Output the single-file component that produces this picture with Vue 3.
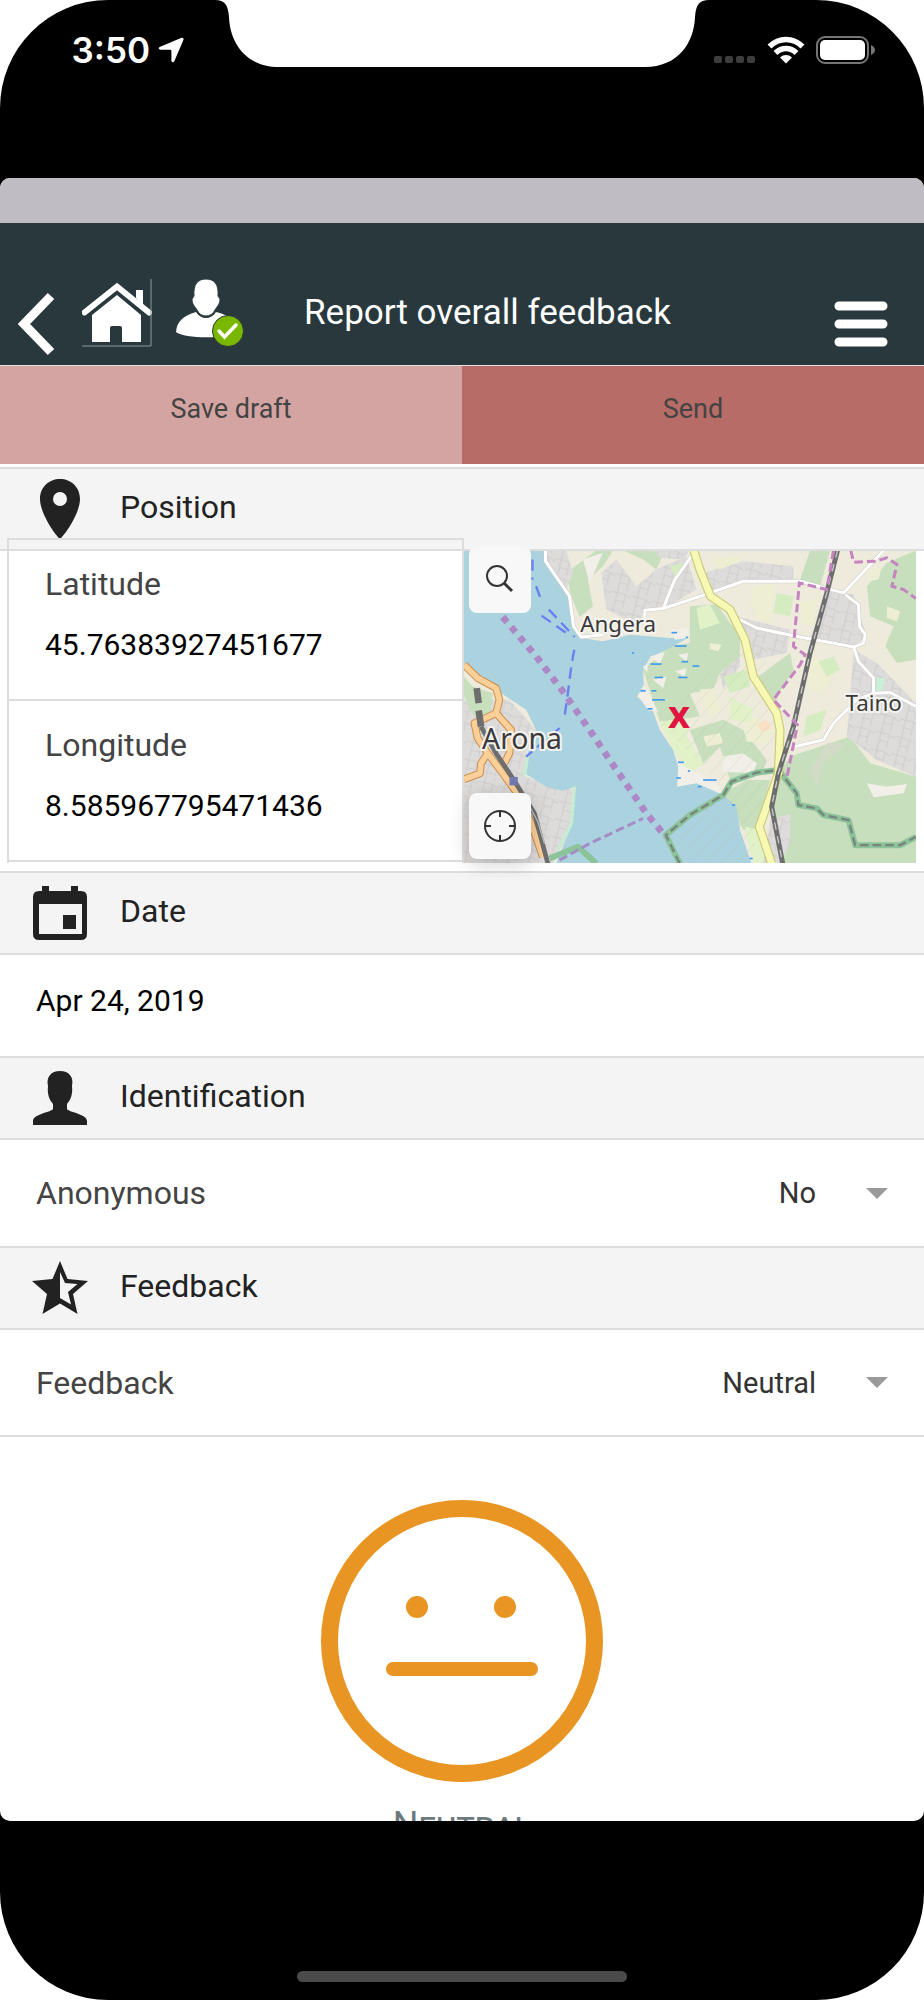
<template>
  <div class="device">
    <header class="status-bar">
      <div class="status-left">
        <span class="time">3:50</span>
        <svg class="location" viewBox="0 0 26 26" aria-hidden="true">
          <path d="M23 1Q26 0 25.400 3L16.400 24Q14.600 26.500 13.400 24V14Q13.400 12.800 12.200 12.800H2.200Q-.6 11.600 1.600 10Z" fill="#fff" />
        </svg>
      </div>
      <svg class="notch" viewBox="0 0 494 68" aria-hidden="true">
        <path d="M0 0C10 0 13 5 14 17C15 43 31 67 64 67H430C463 67 479 43 480 17C481 5 484 0 494 0Z" fill="#fff" />
      </svg>
      <div class="status-right">
        <svg class="signal" viewBox="0 0 42 28" aria-hidden="true">
          <rect v-for="n in 4" :key="n" :x="(n - 1) * 11" y="20" width="8" height="7" rx="2" fill="#3d3d3d" />
        </svg>
        <svg class="wifi" viewBox="0 0 38 28" aria-hidden="true">
          <g fill="none" stroke="#fff" stroke-width="5.500">
            <path d="M2.500 10.500C12 1 26 1 35.500 10.500" />
            <path d="M8.500 17C14.500 11 23.500 11 29.500 17" />
          </g>
          <path d="M13 21.500C16.500 18.200 21.500 18.200 25 21.500L19 27.500Z" fill="#fff" />
        </svg>
        <svg class="battery" viewBox="0 0 60 28" aria-hidden="true">
          <rect x="1" y="1" width="51" height="26" rx="8" fill="none" stroke="#757575" stroke-width="2" />
          <rect x="4" y="4" width="45" height="20" rx="5" fill="#fff" />
          <path d="M55 9Q59 11 59 14Q59 17 55 19Z" fill="#757575" />
        </svg>
      </div>
    </header>

    <main class="sheet">
      <div class="strip"></div>
      <nav class="toolbar">
        <button class="icon-button back" aria-label="Back">
          <svg viewBox="0 0 38 66"><path d="M33 5L6 33L33 61" fill="none" stroke="#fff" stroke-width="9" stroke-linejoin="miter" /></svg>
        </button>
        <button class="icon-button home" aria-label="Home">
          <svg viewBox="0 0 70 68">
            <path d="M54 11H61V26L54 19Z" fill="#fff" />
            <path d="M2.500 33.500L35 7.500L67 33.500" fill="none" stroke="#fff" stroke-width="6" stroke-linecap="round" stroke-linejoin="miter" />
            <path d="M35 16L59 36V63H40V49Q40 47 38 47H30Q28 47 28 49V63H10V36Z" fill="#fff" />
            <path d="M69 0V67M0 67H69" stroke="#8f999b" fill="none" />
          </svg>
        </button>
        <button class="icon-button user" aria-label="Account">
          <svg viewBox="0 0 68 68">
            <path d="M0 53C1 42 7 37 20 33C25 41 35 41 40 33C56 37 61 43 61 53C53 60 8 60 0 53Z" fill="#fff" />
            <path d="M30 0C38 0 43 5 42 17L44 20C44 26 41 27 39 31C37 35 34 37 30 37C26 37 23 35 21 31C19 27 16 26 16 20L18 17C17 5 22 0 30 0Z" fill="#fff" stroke="#28383d" stroke-width="1" />
            <circle cx="52" cy="52" r="15.500" fill="#7ab800" stroke="#28383d" />
            <path d="M43 52L48.500 58L60 46" fill="none" stroke="#fff" stroke-width="3.500" stroke-linecap="round" />
          </svg>
        </button>
        <h1>Report overall feedback</h1>
        <button class="icon-button menu" aria-label="Menu">
          <svg viewBox="0 0 54 46">
            <path d="M5 5H49M5 23H49M5 41H49" stroke="#fff" stroke-width="9" stroke-linecap="round" />
          </svg>
        </button>
      </nav>

      <div class="actions">
        <button class="save">Save draft</button>
        <button class="send">Send</button>
      </div>

      <section>
        <h2>
          <svg viewBox="0 0 60 60" aria-hidden="true">
            <path fill-rule="evenodd" d="M30 0C19 0 10 8 10 20C10 34 25 56 30 60C35 56 50 34 50 20C50 8 41 0 30 0ZM30 13A7 7 0 1 1 30 27A7 7 0 1 1 30 13Z" />
          </svg>
          <span>Position</span>
        </h2>
        <div class="position">
          <div class="coords">
            <div v-for="field in coords" :key="field.id" class="coord">
              <label :for="field.id">{{ field.label }}</label>
              <input :id="field.id" v-model="field.value" type="text">
            </div>
          </div>

          <div class="map">
            <svg class="tiles" viewBox="24 63 1353 937" preserveAspectRatio="xMidYMid slice" role="img" aria-label="Map">
              <defs>
                <pattern id="streets" width="62" height="54" patternUnits="userSpaceOnUse" patternTransform="rotate(14)">
                  <rect width="62" height="54" fill="#dddcdb" />
                  <path d="M0 12H40L62 20M18 0V54M44 14V54M18 36H44" fill="none" stroke="#cbc9c9" stroke-width="2.500" />
                </pattern>
                <pattern id="reserve" width="34" height="34" patternUnits="userSpaceOnUse" patternTransform="rotate(42)">
                  <path d="M0 0V34" stroke="#b8b69d" stroke-width="2" opacity=".6" />
                </pattern>
              </defs>
              <rect x="24" y="63" width="1353" height="937" fill="#eeebdd" />

              <!-- woods and meadows -->
              <g fill="#c8dfbd">
                <path d="M330 130L420 63H470L440 110L395 150L410 230L370 262L345 200Z" />
                <path d="M500 63H625L600 120L560 90Z" />
                <path d="M700 230L780 225L850 320L850 380L790 430L770 480L700 490L730 560L610 575L560 420L640 350L700 340Z" />
                <path d="M1060 63H1120L1090 170L1030 150Z" />
                <path d="M1230 170L1290 100L1377 63V390L1320 400L1285 350L1310 290L1240 260Z" />
                <path d="M905 440L1000 370L1010 420L950 520Z" />
                <path d="M700 600L800 570L860 600L930 690L920 720L820 750L790 650L740 700Z" />
                <path d="M1000 680L1180 620L1240 700L1377 740V1000H970L950 830L970 720Z" />
                <path d="M800 790L870 750H940L900 900L860 900Z" />
              </g>
              <g fill="#e1f2c9">
                <path d="M610 575L700 565L690 620L740 700L700 730L650 660Z" />
                <path d="M820 500L890 540L880 580L820 570Z" />
                <path d="M865 890L920 900L950 1000H890Z" />
                <path d="M720 235L760 225L790 280L730 300Z" />
              </g>
              <g fill="url(#streets)">
                <path d="M270 63H330L350 130L330 180L265 95Z" />
                <path d="M435 130L480 90L540 170L600 120L690 80L720 180L620 240L560 240L550 290L450 240Z" />
                <path d="M745 130L860 95L1010 110L1010 155L850 155L760 190Z" />
                <path d="M840 260L1000 300L990 370L890 390Z" />
                <path d="M1120 185L1190 195L1230 320L1190 350L1060 325Z" />
                <path d="M1190 360L1260 400L1377 520V740L1260 690L1170 620L1180 500Z" />
                <path d="M24 510L160 510L240 600L210 670L205 740L350 780L345 900L290 1000H24Z" />
                <path d="M590 63H700L680 90L610 85Z" />
                <path d="M790 430L850 380L850 410L800 480Z" />
                <path d="M940 870L1000 850L1000 940L970 1000H920Z" />
              </g>
              <g fill="#f2efe9">
                <path d="M800 680L860 670L900 700L890 730L800 725Z" />
                <path d="M665 700L780 760L800 795L720 765L660 775Z" />
                <path d="M1230 760L1290 770L1350 762L1340 790L1250 802Z" />
                <path d="M380 90L440 70L400 160Z" />
              </g>
              <g fill="#eeeed2">
                <path d="M900 170L955 165L940 280L900 270Z" />
                <path d="M860 590L890 560L950 600L930 640L870 635Z" />
                <path d="M730 480L770 475L790 540L760 560Z" />
                <path d="M1060 380L1140 410L1100 490L1050 470Z" />
                <path d="M770 90L840 80L850 95L790 120ZM760 340L795 345L785 365L760 358ZM880 230L890 170L905 175L900 240Z" />
                <path d="M740 620L790 610L800 640L750 650ZM1030 220L1080 210L1070 290L1035 280Z" />
                <path d="M1290 230L1330 245L1320 275L1290 265ZM1240 120L1275 110L1265 150L1235 155Z" />
              </g>
              <g fill="#d5ebc0">
                <path d="M960 190L1010 200L1000 260L950 250Z" />
                <path d="M1050 560L1110 540L1090 600L1040 620ZM1085 395L1130 380L1150 420L1110 440Z" />
                <path d="M800 440L870 420L880 470L820 490ZM640 110L680 100L660 150Z" />
              </g>
              <path d="M1060 720L1110 640L1170 640L1100 700L1080 770Z" fill="#d2dbc6" />
              <path d="M900 585L930 570L945 595L915 605Z" fill="#fadfc6" />
              <path d="M1260 445H1285L1275 485H1255Z" fill="#c9f0d5" />
              <path d="M24 440L50 470L110 490L105 545L60 570L24 500Z" fill="#c8dfbd" />

              <!-- lake -->
              <path fill="#aad3df" d="M24 63H265V95L340 205L350 290L375 325L440 335L520 315L640 325L700 322L640 355L580 385L560 420L562 465L542 500L590 545L610 600L650 660L665 710L662 770L720 760L800 795L840 830L850 900L885 1000H300L345 890L358 770L320 782L270 770L205 730L215 670L240 600L210 540L150 500L70 450L24 420Z" />
              <path fill="#f2efe9" d="M580 380L625 368L610 402ZM590 450L630 440L620 475ZM545 495L570 480L605 545L575 542ZM640 300L700 295L690 325L655 330ZM665 375L695 370L690 395ZM560 410L575 402L572 430ZM655 425L690 415L685 440Z" />
              <path fill="url(#reserve)" d="M700 480L900 300L980 560L930 720L885 1000H670L630 910L810 780L610 580Z" />
              <path d="M355 770L345 880L305 960M205 740L215 670" fill="none" stroke="#c7ecd2" stroke-width="10" />
              <path v-for="d in marsh" :key="d" :d="d" stroke="#3e9bf4" stroke-width="5" />

              <!-- park border -->
              <g fill="none" stroke-linejoin="round">
                <path d="M670 1000L628 915L700 855L800 795L825 755L900 728L965 720L1020 790L1025 825L1080 835L1100 855L1175 870L1195 945H1330L1377 920M280 985L365 950L420 1000" stroke="#8cc39b" stroke-width="18" />
                <path d="M670 1000L628 915L700 855L800 795L825 755L900 728L965 720L1020 790L1025 825L1080 835L1100 855L1175 870L1195 945H1330L1377 920" stroke="#78857d" stroke-width="7" stroke-dasharray="26 12" />
              </g>

              <!-- roads -->
              <g fill="none" stroke="#cdcac7" stroke-width="12" stroke-linejoin="round">
                <path v-for="d in roads" :key="d" :d="d" />
              </g>
              <g fill="none" stroke="#fff" stroke-width="9" stroke-linejoin="round">
                <path v-for="d in roads" :key="d" :d="d" />
              </g>
              <path :d="mainRoad" fill="none" stroke="#c9cc7c" stroke-width="27" stroke-linejoin="round" />
              <path :d="mainRoad" fill="none" stroke="#f6f8b4" stroke-width="20" stroke-linejoin="round" />
              <g fill="none" stroke-linejoin="round">
                <path :d="aronaRoads" stroke="#c98f50" stroke-width="23" />
                <path :d="aronaRoads" stroke="#fbcf98" stroke-width="17" />
              </g>

              <!-- railways -->
              <g fill="none">
                <path :d="railway" stroke="#6e6e6e" stroke-width="15" />
                <path :d="railway" stroke="#c8c8c8" stroke-width="4" stroke-dasharray="22 20" />
                <path d="M62 475L68 520M68 542L75 590" stroke="#6e6e6e" stroke-width="20" />
                <path d="M75 590L120 670L170 745L235 850L275 1000" stroke="#6e6e6e" stroke-width="14" />
                <path d="M200 790L245 875L265 940" stroke="#c0c0c0" stroke-width="4" />
                <rect x="160" y="741" width="25" height="25" fill="#7179b0" />
              </g>

              <!-- borders and ferry lines -->
              <g fill="none" stroke="#c583c0" stroke-width="9" stroke-dasharray="26 12">
                <path d="M1130 63L1110 180L1028 160L1010 350L1045 375L1030 405L950 510L1022 585L990 745" />
                <path d="M1182 63L1190 98L1255 95L1290 85L1320 105L1305 170L1340 180L1377 207" />
                <path d="M310 990L400 940L560 865" stroke="#a58cc6" />
              </g>
              <path d="M140 262L240 380L320 485L400 600L460 690L515 770L570 850L628 920" fill="none" stroke="#ac88c6" stroke-width="20" stroke-dasharray="20 19" />
              <g fill="none" stroke="#6a7ff0" stroke-width="7" stroke-dasharray="34 20">
                <path d="M229 90V150M240 170L258 220M278 240L355 322M256 258L345 320M354 360L345 410L335 490L325 560M310 595L210 680" />
              </g>

              <g class="places">
                <text x="372" y="306">Angera</text>
                <text class="town" x="78" y="656">Arona</text>
                <text x="1166" y="544">Taino</text>
              </g>
              <text class="marker" x="668" y="593">x</text>
            </svg>
            <button class="map-button search" aria-label="Search">
              <svg viewBox="0 0 32 32">
                <circle cx="13" cy="12" r="10" />
                <path d="M20 19L28 27" stroke-width="3" />
              </svg>
            </button>
            <button class="map-button locate" aria-label="Locate">
              <svg viewBox="0 0 32 32">
                <circle cx="16" cy="16" r="15" />
                <path d="M16 1V7M16 25V31M1 16H7M25 16H31" />
              </svg>
            </button>
          </div>
        </div>
      </section>

      <section>
        <h2>
          <svg viewBox="0 0 60 60" aria-hidden="true">
            <path fill-rule="evenodd" d="M12 3H19V8H41V3H48V8H51Q57 8 57 14V51Q57 57 51 57H9Q3 57 3 51V14Q3 8 9 8H12ZM9 21V51H52V21ZM33 32H46V46H33Z" />
          </svg>
          <span>Date</span>
        </h2>
        <div class="row date-row">
          <input v-model="date" type="text" aria-label="Date">
        </div>
      </section>

      <section>
        <h2>
          <svg viewBox="0 0 60 60" aria-hidden="true">
            <path d="M30 3C39 3 44 9 42 18C43 28 40 32 37 36V41C38 44 57 46 57 53V57H3V53C3 46 22 44 23 41V36C20 32 17 28 18 18C16 9 21 3 30 3Z" />
          </svg>
          <span>Identification</span>
        </h2>
        <div class="row">
          <label for="anonymous">Anonymous</label>
          <select id="anonymous" v-model="anonymous">
            <option>No</option>
            <option>Yes</option>
          </select>
          <svg class="arrow" viewBox="0 0 22 11" aria-hidden="true"><path d="M0 0H22L11 11Z" /></svg>
        </div>
      </section>

      <section>
        <h2>
          <svg viewBox="0 0 60 60" aria-hidden="true">
            <path fill-rule="evenodd" d="M30 3L37.500 21L58 23L43 36L47.500 56L30 45.500L12.500 56L17 36L2 23L22.500 21ZM30 14V40L41 46.500L38 34L47.500 26L35 25Z" />
          </svg>
          <span>Feedback</span>
        </h2>
        <div class="row last">
          <label for="feedback">Feedback</label>
          <select id="feedback" v-model="feedback">
            <option>Neutral</option>
            <option>Good</option>
            <option>Bad</option>
          </select>
          <svg class="arrow" viewBox="0 0 22 11" aria-hidden="true"><path d="M0 0H22L11 11Z" /></svg>
        </div>
      </section>

      <figure class="mood">
        <svg viewBox="0 0 282 282" aria-hidden="true">
          <circle cx="141" cy="141" r="132.500" fill="none" stroke="#e89523" stroke-width="17" />
          <circle cx="96" cy="107" r="11" fill="#e89523" />
          <circle cx="184" cy="107" r="11" fill="#e89523" />
          <rect x="65" y="162" width="152" height="14" rx="7" fill="#e89523" />
        </svg>
        <figcaption>{{ feedback }}</figcaption>
      </figure>
    </main>

    <footer class="home-area">
      <div class="home-indicator"></div>
    </footer>
  </div>
</template>

<script setup>
import { ref } from 'vue';

const coords = ref([
  { id: 'latitude', label: 'Latitude', value: '45.76383927451677' },
  { id: 'longitude', label: 'Longitude', value: '8.585967795471436' }
]);
const date = ref('Apr 24, 2019');
const anonymous = ref('No');
const feedback = ref('Neutral');

// map lines
const roads = [
  'M268 63V95L340 200L352 290L375 322L440 315',
  'M565 265V242L620 237L745 195L860 155H1030L1160 190L1280 63',
  'M620 237L655 150L705 80',
  'M840 265L900 295L1010 318L1190 352L1220 340L1225 315L1208 290L1205 225L1165 195',
  'M1190 352L1205 395L1250 445V490L1300 488L1377 530',
  'M1250 490L1200 510L1130 580L1100 630L1015 650'
];
const mainRoad = 'M712 63L730 120L762 200L820 240L865 330L890 440L960 550L970 600L965 730L908 890L945 1000';
const aronaRoads = 'M24 405L65 445L120 475L130 510L120 550L55 580L65 625L95 670L75 700L72 730L24 748M120 550L165 600L160 670L145 700M95 670L140 730L190 800L225 880L260 980';
const railway = 'M1142 63L1110 190L1060 370L1010 590L965 730L945 830L978 1000';
const marsh = [
  'M645 309H662', 'M655 349H690', 'M582 403H615', 'M675 396H695', 'M708 409H728',
  'M595 443H620', 'M665 443H693', 'M552 483H568', 'M585 483H600', 'M587 510H625',
  'M573 537H588', 'M665 697H682', 'M740 750H780', 'M660 744H673', 'M724 770H735',
  'M527 370H533', 'M688 323H694', 'M826 825H836', 'M879 985H888', 'M694 723H701'
];
</script>

<style>
body {
  margin: 0;
  background: #fff;
}
</style>

<style scoped>
.device {
  display: flex;
  flex-direction: column;
  height: 100vh;
  overflow: hidden;
  background: #000;
  border-radius: 108px;
  font-family: Roboto, sans-serif;
  color: #222;
}

button,
input,
select {
  margin: 0;
  padding: 0;
  border: 0;
  background: none;
  font-family: inherit;
  outline: none;
}

svg {
  display: block;
  flex: none;
}

.status-bar {
  display: grid;
  grid-template-columns: 1fr 494px 1fr;
  flex: none;
  height: 178px;
}

.status-left,
.status-right {
  display: flex;
  align-items: center;
  height: 100px;
}

.status-left {
  justify-content: flex-end;
  gap: 8px;
  padding-right: 31px;
}

.time {
  color: #fff;
  font-family: Inter, sans-serif;
  font-size: 35px;
  font-weight: 600;
}

.location {
  width: 26px;
}

.notch {
  width: 494px;
}

.status-right {
  gap: 11px;
  padding-left: 5px;
}

.signal {
  width: 42px;
}

.wifi {
  width: 38px;
}

.battery {
  width: 60px;
}

.sheet {
  flex: 1;
  min-height: 0;
  overflow: hidden;
  background: #fff;
  border-radius: 10px;
}

.strip {
  height: 45px;
  background: #bfbdc3;
}

.toolbar {
  display: flex;
  align-items: flex-start;
  height: 86px;
  padding: 56px 36px 0 18px;
  background: #28383d;
}

.icon-button svg {
  width: 100%;
}

.back {
  width: 38px;
  margin-top: 12px;
}

.home {
  width: 70px;
  margin-left: 26px;
}

.user {
  width: 68px;
  margin-left: 24px;
}

h1 {
  flex: 1;
  margin: 10px 0 0 60px;
  color: #fff;
  font-size: 35px;
  font-weight: 400;
  line-height: 48px;
}

.menu {
  width: 54px;
  margin-top: 22px;
}

.actions {
  display: flex;
  margin-bottom: 3px;
  border-top: 1px solid #e7e2e1;
}

.actions button {
  flex: 1;
  height: 98px;
  padding-bottom: 12px;
  color: #444;
  font-size: 27px;
}

.save {
  background: #d4a4a2;
}

.actions .send {
  background: #b86c67;
}

h2 {
  display: flex;
  align-items: center;
  gap: 30px;
  height: 80px;
  margin: 0;
  padding: 0 30px;
  border: solid #ddd;
  border-width: 2px 0;
  background: #f4f4f4;
  font-size: 32px;
  font-weight: 400;
}

h2 span {
  padding-bottom: 5px;
}

h2 svg {
  width: 60px;
  fill: #222;
}

.position {
  display: grid;
  grid-template-columns: 457fr 452fr;
  padding: 0 8px 8px 7px;
}

.coords {
  margin-top: -13px;
  border: 2px solid #ddd;
  border-bottom: 0;
}

.coord {
  display: flex;
  flex-direction: column;
  gap: 20px;
  height: 161px;
  box-sizing: border-box;
  padding: 24px 36px 0;
  border-bottom: 2px solid #ddd;
}

.coord label,
.row label {
  color: #444;
  font-size: 32px;
  line-height: 40px;
}

.coord input,
.date-row input {
  width: 100%;
  height: 40px;
  color: #000;
  font-size: 30px;
}

.map {
  position: relative;
  height: 312px;
}

.tiles {
  width: 100%;
  height: 100%;
}

.places text {
  fill: #3a3a3a;
  stroke: #f5f3ef;
  stroke-width: 12px;
  stroke-linejoin: round;
  paint-order: stroke;
  font-family: "Noto Sans", sans-serif;
  font-size: 67px;
}

.places .town {
  font-size: 85px;
}

.marker {
  fill: #e0143f;
  font-family: "Noto Sans", sans-serif;
  font-size: 114px;
  font-weight: 700;
  text-anchor: middle;
}

.map-button {
  position: absolute;
  left: 5px;
  display: flex;
  align-items: center;
  justify-content: center;
  width: 62px;
  height: 66px;
  border-radius: 8px;
  background: #f8f8f8;
}

.map-button svg {
  width: 32px;
  fill: none;
  stroke: #333;
  stroke-width: 2px;
}

.search {
  top: -4px;
}

.locate {
  bottom: 4px;
  box-shadow: 0 4px 20px rgba(0, 0, 0, 0.2);
}

.row {
  display: flex;
  align-items: center;
  height: 106px;
  padding: 0 36px;
}

.date-row {
  align-items: flex-start;
  height: 76px;
  padding-top: 25px;
}

.row label {
  flex: 1;
}

.row select {
  appearance: none;
  color: #333;
  font-size: 29px;
  text-align-last: right;
}

.arrow {
  width: 22px;
  margin-left: 50px;
  fill: #999;
}

.last {
  height: 105px;
  border-bottom: 2px solid #ddd;
}

.mood {
  display: flex;
  flex-direction: column;
  align-items: center;
  margin: 0;
  padding-top: 63px;
}

.mood svg {
  width: 282px;
}

figcaption {
  margin-top: 22px;
  color: #6b7a7d;
  font-size: 36px;
  font-variant: small-caps;
  line-height: 42px;
}

.home-area {
  display: flex;
  flex: none;
  align-items: flex-end;
  justify-content: center;
  height: 161px;
  padding-bottom: 18px;
}

.home-indicator {
  width: 330px;
  height: 11px;
  border-radius: 6px;
  background: #4a4a4a;
}
</style>
